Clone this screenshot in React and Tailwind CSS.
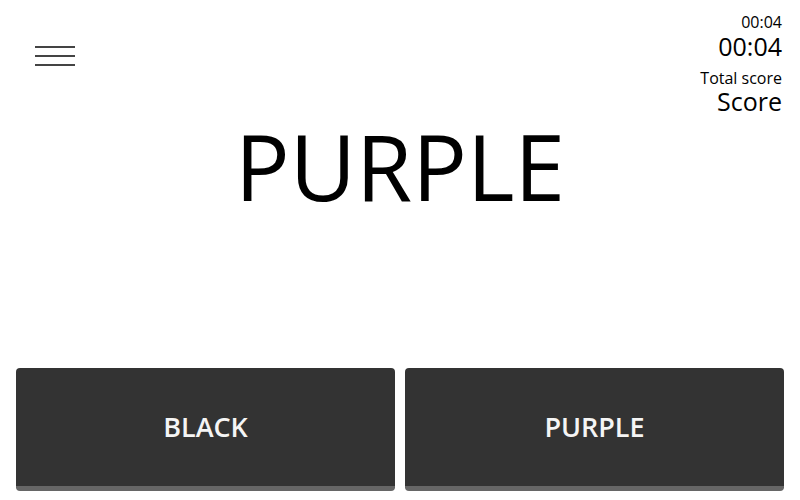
import React from "react";

const App = () => {
  const options = ["BLACK", "PURPLE"];

  return (
    <div
      className="w-[800px] h-[500px] bg-white flex flex-col text-black"
      style={{ fontFamily: '"Open Sans", sans-serif' }}
    >
      <div className="flex justify-between items-start pl-[35px] pr-[18px] pt-[12px]">
        <button className="mt-[34px] flex flex-col gap-[7px]">
          <span className="block w-[40px] h-[2px] bg-[#444]" />
          <span className="block w-[40px] h-[2px] bg-[#444]" />
          <span className="block w-[40px] h-[2px] bg-[#444]" />
        </button>
        <div className="flex flex-col items-end">
          <div className="text-[16px] leading-[20px]">00:04</div>
          <div className="text-[25px] leading-[29px]">00:04</div>
          <div className="text-[16px] leading-[20px] mt-[7px]">Total score</div>
          <div className="text-[25px] leading-[27px]">Score</div>
        </div>
      </div>

      <div className="flex justify-center mt-[-4px]">
        <div className="text-[91px] leading-[110px]">PURPLE</div>
      </div>

      <div className="mt-auto flex gap-[10px] px-[16px] pb-[9px]">
        {options.map((opt) => (
          <button
            key={opt}
            className="flex-1 h-[123px] bg-[#333] rounded-[4px] border-b-[5px] border-[#666] text-[#f5f5f5] text-[27px] font-semibold flex items-center justify-center"
          >
            {opt}
          </button>
        ))}
      </div>
    </div>
  );
};

export default App;
